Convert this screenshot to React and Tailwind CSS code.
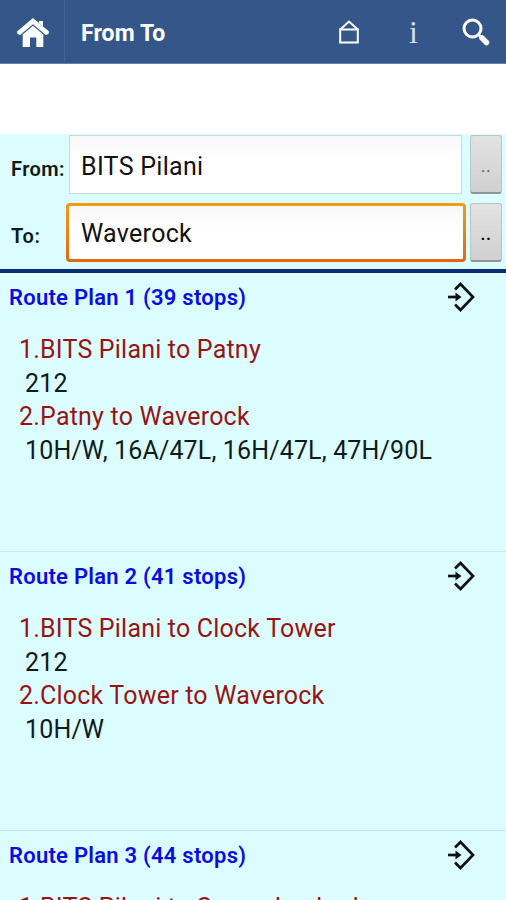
import React, { useState } from 'react';

const plans = [
  {
    id: 1,
    stops: 39,
    legs: [
      { title: 'BITS Pilani to Patny', buses: '212' },
      { title: 'Patny to Waverock', buses: '10H/W, 16A/47L, 16H/47L, 47H/90L' },
    ],
  },
  {
    id: 2,
    stops: 41,
    legs: [
      { title: 'BITS Pilani to Clock Tower', buses: '212' },
      { title: 'Clock Tower to Waverock', buses: '10H/W' },
    ],
  },
  {
    id: 3,
    stops: 44,
    legs: [{ title: 'BITS Pilani to Secunderabad', buses: '' }],
  },
];

function HomeIcon() {
  return (
    <svg width="34" height="32" viewBox="0 0 34 32" fill="#fff">
      <path d="M17 1 L33 14.5 L32.5 17 L29.8 18 L17 7.2 L4.2 18 L1.5 17 L1 14.5 Z" />
      <path d="M17 8.8 L27.3 17.5 V30 H20.3 V20.5 H14 V30 H6.7 V17.5 Z" />
      <path d="M23 4 H27 V9.5 L23 6 Z" />
    </svg>
  );
}

function StopIcon() {
  return (
    <svg width="20" height="24" viewBox="0 0 20 24" fill="none" stroke="#fff" strokeWidth="2">
      <path d="M1.2 9.6 H18.8 V22.4 H1.2 Z" />
      <path d="M1 9.8 L10 1.6 L19 9.8" />
    </svg>
  );
}

function SearchIcon() {
  return (
    <svg width="28" height="28" viewBox="0 0 28 28" fill="none" stroke="#fff">
      <circle cx="10.5" cy="10.5" r="8.5" strokeWidth="3" />
      <path d="M16.8 16.8 L20 20" strokeWidth="3" />
      <path d="M20 20 L24.5 24.5" strokeWidth="5.5" strokeLinecap="round" />
    </svg>
  );
}

function EnterIcon() {
  return (
    <svg width="28" height="30" viewBox="0 0 28 30" fill="none" stroke="#111" strokeWidth="2.7">
      <path d="M8 7.5 L13.5 2 L26 15 L13.5 28 L8 22.5" />
      <path d="M1 15 H11" />
      <path d="M8.5 10.5 L14.5 15 L8.5 19.5 Z" fill="#111" stroke="none" />
    </svg>
  );
}

function PickButton({ muted }) {
  return (
    <button
      className={`w-8 h-[59px] shrink-0 pt-1 rounded-[3px] border border-[#b9c4c4] border-b-2 border-b-[#8f9696] bg-gradient-to-b from-[#e2e2e2] to-[#d0d0d0] text-[18px] tracking-[0.5px] leading-none ${muted ? 'text-[#666]' : 'text-black font-medium'}`}
    >
      ..
    </button>
  );
}

function RoutePlan({ plan }) {
  return (
    <section className="h-[279px] shrink-0 border-b border-[#d5dfe6]">
      <div className="flex items-center justify-between h-[49px] pl-[9px] pr-[31px]">
        <h2 className="text-[22px] font-semibold text-[#0b0be6] whitespace-nowrap tracking-[0.25px]">
          Route Plan {plan.id} ({plan.stops} stops)
        </h2>
        <div className="pb-[2px]">
          <EnterIcon />
        </div>
      </div>
      <div className="pt-[11px] text-[25px] leading-[33.6px] tracking-[0.15px] whitespace-nowrap">
        {plan.legs.map((leg, i) => (
          <div key={i}>
            <p className="pl-[19px] text-[#981414] tracking-[0.2px]">{i + 1}.{leg.title}</p>
            <p className="pl-[25px] text-[#111a1a]">{leg.buses}</p>
          </div>
        ))}
      </div>
    </section>
  );
}

export default function App() {
  const [from, setFrom] = useState('BITS Pilani');
  const [to, setTo] = useState('Waverock');

  return (
    <div className="w-[506px] h-[900px] overflow-hidden flex flex-col bg-[#dcfdff] font-['Roboto',sans-serif]">
      {/* Header */}
      <header className="h-[64px] shrink-0 flex items-center bg-[#355689] border-b border-[#6280aa] text-white">
        <div className="w-[65px] h-full flex items-center justify-center pt-[3px] pl-[2px] border-r border-[#456496]">
          <HomeIcon />
        </div>
        <h1 className="flex-1 pl-4 pt-[6px] text-[23px] font-bold tracking-[0.1px]">From To</h1>
        <div className="flex items-center pt-px pr-4">
          <StopIcon />
          <span className="w-[103px] pl-[6px] text-center font-['Liberation_Serif',serif] text-[32px] leading-none text-[#d5deea]">i</span>
          <SearchIcon />
        </div>
      </header>

      <div className="h-[70px] shrink-0 bg-white" />

      {/* Search form */}
      <div className="h-[139px] shrink-0 border-b-4 border-[#0a2d72] pr-[4px]">
        <div className="flex items-start h-[68px] pt-px">
          <label className="w-[69px] shrink-0 pl-[11px] pt-[22px] text-[20px] leading-[24px] font-semibold tracking-[0.4px] text-[#101818]">From:</label>
          <input
            value={from}
            onChange={(e) => setFrom(e.target.value)}
            className="w-[393px] h-[59px] mr-2 pl-[11px] pt-[3px] border border-[#c5dcdc] bg-gradient-to-b from-[#f7f7f7] to-white to-40% text-[25px] tracking-[0.3px] text-[#111] outline-none"
          />
          <PickButton muted />
        </div>
        <div className="flex items-start pt-px">
          <label className="w-[66px] shrink-0 pl-[11px] pt-[21px] text-[20px] leading-[24px] font-semibold tracking-[0.7px] text-[#101818]">To:</label>
          <div className="w-[400px] h-[59px] mr-[4px] p-[3px] rounded-[4px] bg-gradient-to-b from-[#f59a12] to-[#de6a14]">
            <input
              value={to}
              onChange={(e) => setTo(e.target.value)}
              className="block w-full h-full pt-px pl-3 rounded-[1px] bg-gradient-to-b from-[#f7f7f7] to-white to-40% text-[25px] tracking-[0.3px] text-[#111] outline-none"
            />
          </div>
          <PickButton />
        </div>
      </div>

      {/* Results */}
      {plans.map((plan) => (
        <RoutePlan key={plan.id} plan={plan} />
      ))}
    </div>
  );
}
